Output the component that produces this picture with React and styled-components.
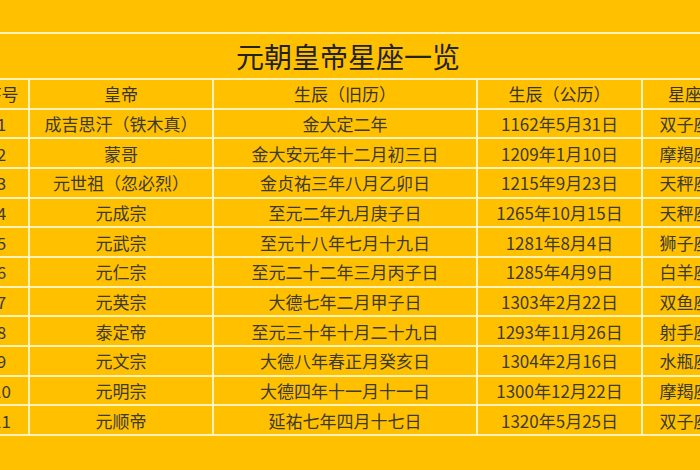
import React from 'react';
import styled, { createGlobalStyle } from 'styled-components';

const GlobalStyle = createGlobalStyle`
  html, body {
    margin: 0;
    padding: 0;
    background: #ffc000;
    overflow: hidden;
  }
  body {
    width: 700px;
    height: 470px;
    font-family: "Noto Sans CJK SC", "Noto Sans", sans-serif;
  }
`;

const Page = styled.div`
  width: 700px;
  height: 470px;
  padding-top: 32px;
  box-sizing: border-box;
  background: #ffc000;
  overflow: hidden;
`;

const Table = styled.div`
  margin-left: -25px;
  width: 760px;
  display: grid;
  grid-template-columns: 53px 182px 262px 163px 84px 1fr;
  grid-template-rows: 44px repeat(12, 27.67px);
  gap: 2px;
  padding: 2px 0;
  background: #fff3b8;
`;

const Title = styled.div`
  grid-column: 1 / -1;
  background: #ffc000;
  display: flex;
  align-items: center;
  justify-content: center;
  padding-right: 14px;
  font-size: 28px;
  font-weight: 400;
  color: #222;
`;

const Cell = styled.div`
  background: #ffc000;
  display: flex;
  align-items: center;
  justify-content: center;
  white-space: nowrap;
  font-size: 17px;
  color: ${({ $head }) => ($head ? '#3a3428' : '#3d3a30')};
  line-height: 1;
`;

const headers = ['序号', '皇帝', '生辰（旧历）', '生辰（公历）', '星座', ''];

const rows = [
  ['1', '成吉思汗（铁木真）', '金大定二年', '1162年5月31日', '双子座'],
  ['2', '蒙哥', '金大安元年十二月初三日', '1209年1月10日', '摩羯座'],
  ['3', '元世祖（忽必烈）', '金贞祐三年八月乙卯日', '1215年9月23日', '天秤座'],
  ['4', '元成宗', '至元二年九月庚子日', '1265年10月15日', '天秤座'],
  ['5', '元武宗', '至元十八年七月十九日', '1281年8月4日', '狮子座'],
  ['6', '元仁宗', '至元二十二年三月丙子日', '1285年4月9日', '白羊座'],
  ['7', '元英宗', '大德七年二月甲子日', '1303年2月22日', '双鱼座'],
  ['8', '泰定帝', '至元三十年十月二十九日', '1293年11月26日', '射手座'],
  ['9', '元文宗', '大德八年春正月癸亥日', '1304年2月16日', '水瓶座'],
  ['10', '元明宗', '大德四年十一月十一日', '1300年12月22日', '摩羯座'],
  ['11', '元顺帝', '延祐七年四月十七日', '1320年5月25日', '双子座'],
];

const App = () => (
  <>
    <GlobalStyle />
    <Page>
      <Table>
        <Title>元朝皇帝星座一览</Title>
        {headers.map((h, i) => (
          <Cell key={`h-${i}`} $head>
            {h}
          </Cell>
        ))}
        {rows.map((row) =>
          [...row, ''].map((value, i) => <Cell key={`${row[0]}-${i}`}>{value}</Cell>)
        )}
      </Table>
    </Page>
  </>
);

export default App;
